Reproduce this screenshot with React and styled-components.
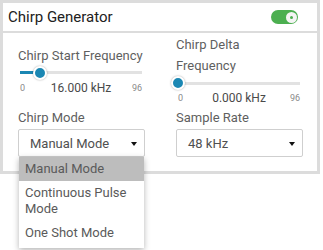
import styled, { createGlobalStyle } from "styled-components";

const GlobalStyle = createGlobalStyle`
  body {
    margin: 0;
    background: #ffffff;
    font-family: Roboto, "Liberation Sans", sans-serif;
  }
`;

const Page = styled.div`
  min-height: 250px;
  width: 323px;
`;

const Card = styled.div`
  width: 320px;
  box-sizing: border-box;
  border: 3px solid #dcdcdc;
  background: #fff;
`;

const Header = styled.div`
  display: flex;
  align-items: center;
  justify-content: space-between;
  height: 28px;
  padding: 0 19px 0 5px;
  border-bottom: 2px solid #dcdcdc;
`;

const Title = styled.div`
  font-size: 15px;
  color: #212121;
`;

const Toggle = styled.div`
  display: flex;
  align-items: center;
  justify-content: flex-end;
  width: 27px;
  height: 14px;
  padding: 0 1px;
  box-sizing: border-box;
  border-radius: 7px;
  background: #4caf50;
`;

const Knob = styled.div`
  display: flex;
  align-items: center;
  justify-content: center;
  width: 11px;
  height: 11px;
  border-radius: 50%;
  background: #f4f4f4;
  &::after {
    content: "";
    width: 3px;
    height: 3px;
    border-radius: 50%;
    background: #4caf50;
  }
`;

const Body = styled.div`
  display: grid;
  grid-template-columns: 127px 127px;
  column-gap: 31px;
  align-items: center;
  padding: 1px 14px 14px 15px;
`;

const Field = styled.div`
  display: flex;
  flex-direction: column;
  position: relative;
`;

const Label = styled.div`
  font-size: 13px;
  line-height: 21px;
  color: #5f5f5f;
`;

const Slider = styled.div`
  position: relative;
  height: 14px;
  margin: 0 3px 0 2px;
  display: flex;
  align-items: center;
`;

const Track = styled.div`
  width: 100%;
  height: 3px;
  background: #e2e2e2;
  display: flex;
`;

const Fill = styled.div`
  height: 100%;
  background: #1b87b3;
`;

const Thumb = styled.div`
  position: absolute;
  top: 50%;
  width: 10px;
  height: 10px;
  border-radius: 50%;
  background: #1b87b3;
  border: 2px solid #fff;
  box-shadow: 0 0 2px rgba(0, 0, 0, 0.35);
  transform: translate(-50%, -50%);
`;

const Values = styled.div`
  display: grid;
  grid-template-columns: 1fr auto 1fr;
  align-items: center;
  height: 16px;
  margin: 0 3px 1px 2px;
`;

const Limit = styled.span`
  font-size: 9px;
  color: #8a8a8a;
  text-align: ${(p) => (p.$end ? "right" : "left")};
`;

const Value = styled.span`
  font-size: 12px;
  color: #4a4a4a;
`;

const Select = styled.div`
  display: flex;
  align-items: center;
  justify-content: space-between;
  height: 28px;
  margin-top: 1px;
  box-sizing: border-box;
  padding: 0 7px 0 11px;
  border: 1px solid #cfcfcf;
  border-radius: 2px;
  font-size: 13px;
  color: #505050;
`;

const Caret = styled.span`
  width: 0;
  height: 0;
  border-left: 3.5px solid transparent;
  border-right: 3.5px solid transparent;
  border-top: 4px solid #111;
  margin-top: 2px;
`;

const Menu = styled.ul`
  position: absolute;
  top: 100%;
  left: 1px;
  right: 1px;
  margin: 0;
  padding: 0 0 3px;
  list-style: none;
  background: #fff;
  box-shadow: 0 2px 6px rgba(0, 0, 0, 0.3);
  z-index: 2;
`;

const Item = styled.li`
  padding: 4px 6px;
  font-size: 13px;
  line-height: 16px;
  color: #5a5a5a;
  background: ${(p) => (p.$active ? "#bdbdbd" : "transparent")};
`;

const RangeSlider = ({ value, max }) => {
  const pct = (value / max) * 100;
  return (
    <>
      <Slider>
        <Track>
          <Fill style={{ width: `${pct}%` }} />
        </Track>
        <Thumb style={{ left: `${pct}%` }} />
      </Slider>
      <Values>
        <Limit>0</Limit>
        <Value>{value.toFixed(3)} kHz</Value>
        <Limit $end>{max}</Limit>
      </Values>
    </>
  );
};

export default function App() {
  return (
    <Page>
      <GlobalStyle />
      <Card>
        <Header>
          <Title>Chirp Generator</Title>
          <Toggle>
            <Knob />
          </Toggle>
        </Header>
        <Body>
          <Field>
            <Label>Chirp Start Frequency</Label>
            <RangeSlider value={16} max={96} />
          </Field>
          <Field>
            <Label>
              Chirp Delta
              <br />
              Frequency
            </Label>
            <RangeSlider value={0} max={96} />
          </Field>
          <Field>
            <Label>Chirp Mode</Label>
            <Select>
              Manual Mode
              <Caret />
            </Select>
            <Menu>
              <Item $active>Manual Mode</Item>
              <Item>Continuous Pulse Mode</Item>
              <Item>One Shot Mode</Item>
            </Menu>
          </Field>
          <Field>
            <Label>Sample Rate</Label>
            <Select>
              48 kHz
              <Caret />
            </Select>
          </Field>
        </Body>
      </Card>
    </Page>
  );
}
